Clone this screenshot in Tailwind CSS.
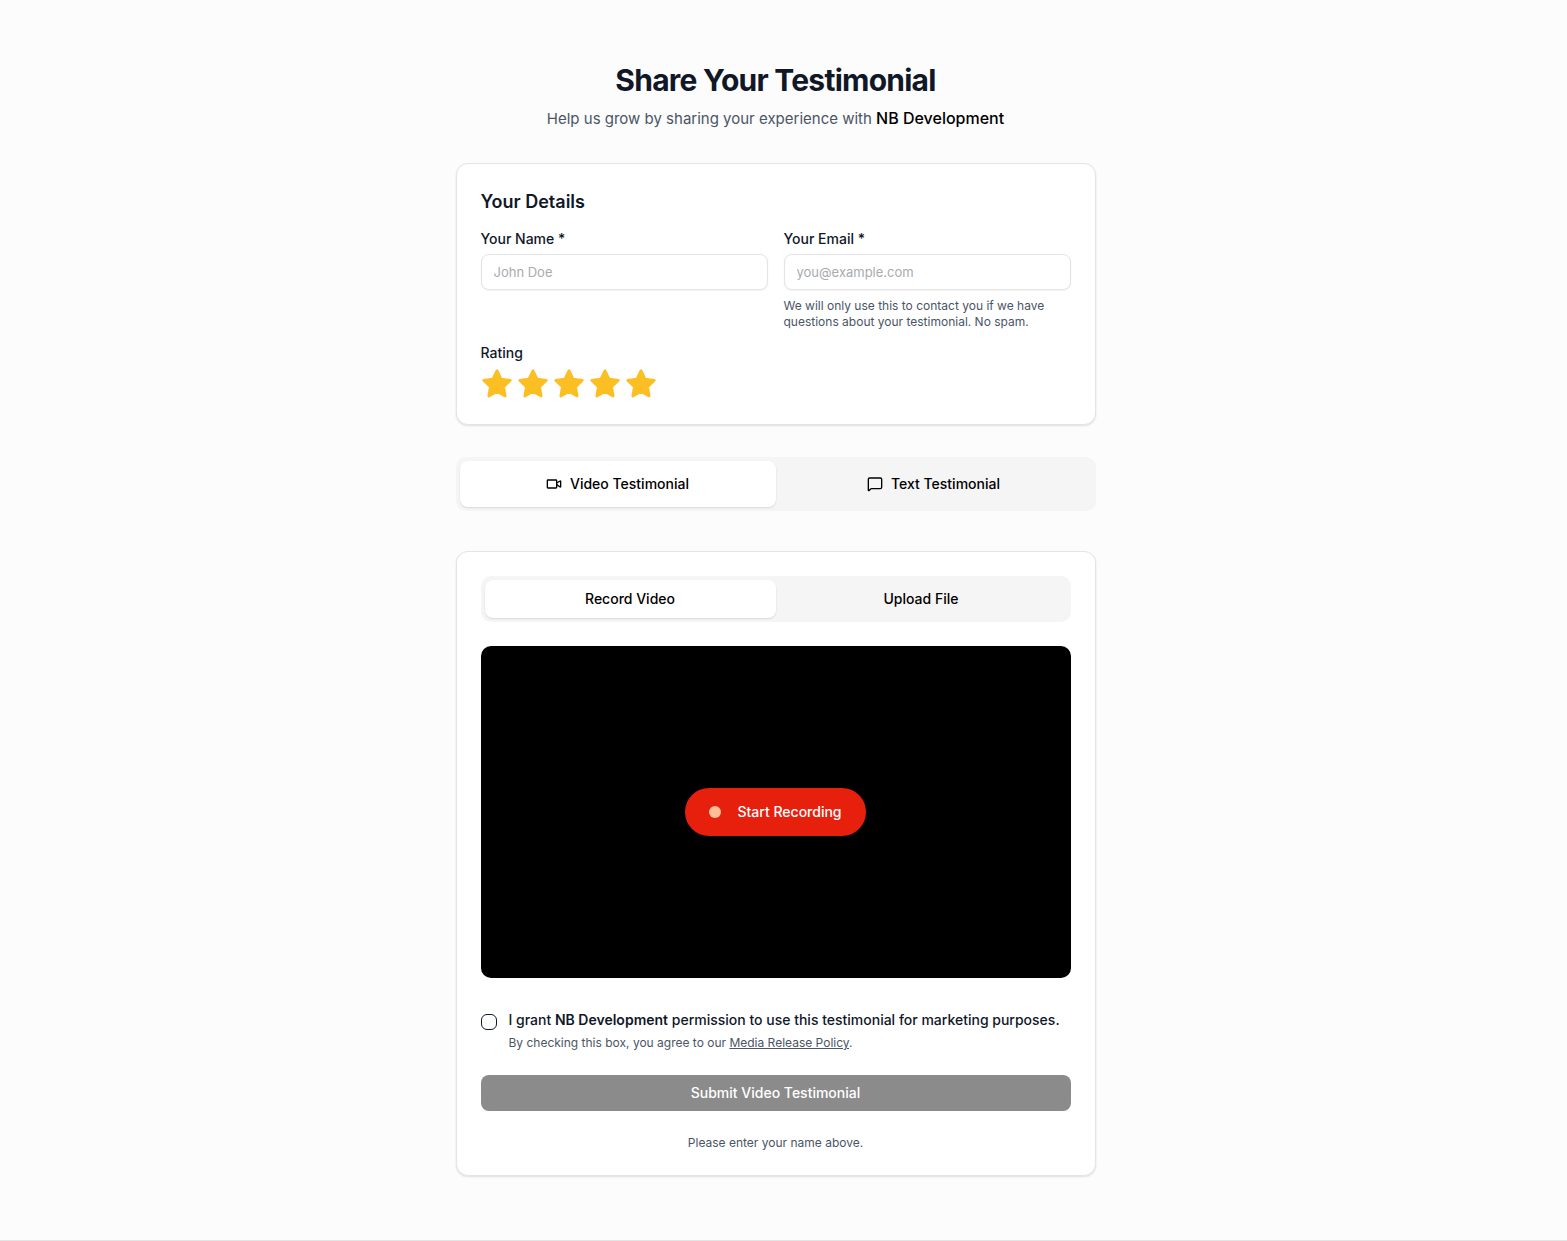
<!DOCTYPE html>
<html lang="en">
<head>
  <meta charset="UTF-8" />
  <meta name="viewport" content="width=device-width, initial-scale=1.0" />
  <title>Share Your Testimonial - NB Development</title>
  <script src="https://cdn.jsdelivr.net/npm/@tailwindcss/browser@4"></script>
</head>
<body class="min-h-screen bg-[#fcfcfc] font-['Inter',sans-serif] text-gray-900">

  <main class="pt-[62px] pb-16 pr-4">
    <div class="mx-auto w-full max-w-2xl px-4">

      <header class="mb-8 text-center">
        <h1 class="text-3xl leading-9 font-bold tracking-tight">Share Your Testimonial</h1>
        <p class="mt-2 text-[15px] leading-6 text-gray-600">Help us grow by sharing your experience with <span class="text-base leading-6 font-medium text-black">NB Development</span></p>
      </header>

      <!-- Details -->
      <section class="rounded-xl border border-[#e4e4e4] bg-white p-6 shadow-[0_1px_2px_rgb(0_0_0/0.12)]">
        <h2 class="mb-4 text-lg font-semibold">Your Details</h2>
        <div class="grid grid-cols-2 gap-4">
          <div>
            <label for="name" class="mb-2 block text-sm leading-none font-medium">Your Name *</label>
            <input id="name" type="text" placeholder="John Doe" class="h-9 w-full rounded-lg border border-[#e4e4e4] bg-white px-3 text-[13px] shadow-[0_1px_2px_rgb(0_0_0/0.06)] placeholder:text-[#a9abaf]" />
          </div>
          <div>
            <label for="email" class="mb-2 block text-sm leading-none font-medium">Your Email *</label>
            <input id="email" type="email" placeholder="you@example.com" class="h-9 w-full rounded-lg border border-[#e4e4e4] bg-white px-3 text-[13px] shadow-[0_1px_2px_rgb(0_0_0/0.06)] placeholder:text-[#a9abaf]" />
            <p class="mt-2 text-xs text-gray-600">We will only use this to contact you if we have questions about your testimonial. No spam.</p>
          </div>
        </div>

        <div class="mt-4">
          <p class="mb-2 text-sm leading-none font-medium">Rating</p>
          <div class="flex gap-1 text-[#fbbf24]">
            <button type="button" aria-label="1 star">
              <svg class="size-8" viewBox="0 0 24 24" fill="currentColor" stroke="currentColor" stroke-width="2" stroke-linecap="round" stroke-linejoin="round"><use href="#star" /></svg>
            </button>
            <button type="button" aria-label="2 stars">
              <svg class="size-8" viewBox="0 0 24 24" fill="currentColor" stroke="currentColor" stroke-width="2" stroke-linecap="round" stroke-linejoin="round"><use href="#star" /></svg>
            </button>
            <button type="button" aria-label="3 stars">
              <svg class="size-8" viewBox="0 0 24 24" fill="currentColor" stroke="currentColor" stroke-width="2" stroke-linecap="round" stroke-linejoin="round"><use href="#star" /></svg>
            </button>
            <button type="button" aria-label="4 stars">
              <svg class="size-8" viewBox="0 0 24 24" fill="currentColor" stroke="currentColor" stroke-width="2" stroke-linecap="round" stroke-linejoin="round"><use href="#star" /></svg>
            </button>
            <button type="button" aria-label="5 stars">
              <svg class="size-8" viewBox="0 0 24 24" fill="currentColor" stroke="currentColor" stroke-width="2" stroke-linecap="round" stroke-linejoin="round"><use href="#star" /></svg>
            </button>
          </div>
        </div>
      </section>

      <!-- Testimonial type -->
      <div role="tablist" class="mt-8 grid h-[54px] grid-cols-2 rounded-[10px] bg-[#f5f5f5] p-1 text-sm font-medium text-black">
        <button type="button" role="tab" aria-selected="true" class="flex items-center justify-center gap-2 rounded-lg bg-white shadow-[0_1px_2px_rgb(0_0_0/0.12)]">
          <svg class="size-4" viewBox="0 0 24 24" fill="none" stroke="currentColor" stroke-width="2" stroke-linecap="round" stroke-linejoin="round">
            <path d="m16 13 5.223 3.482a.5.5 0 0 0 .777-.416V7.87a.5.5 0 0 0-.752-.432L16 10.5" />
            <rect x="2" y="6" width="14" height="12" rx="1" />
          </svg>
          Video Testimonial
        </button>
        <button type="button" role="tab" aria-selected="false" class="flex items-center justify-center gap-2 rounded-lg">
          <svg class="size-4" viewBox="0 0 24 24" fill="none" stroke="currentColor" stroke-width="2" stroke-linecap="round" stroke-linejoin="round">
            <path d="M22 17a2 2 0 0 1-2 2H6.828a2 2 0 0 0-1.414.586l-2.202 2.202A.71.71 0 0 1 2 21.286V5a2 2 0 0 1 2-2h16a2 2 0 0 1 2 2z" />
          </svg>
          Text Testimonial
        </button>
      </div>

      <!-- Recorder -->
      <section class="mt-10 rounded-xl border border-[#e4e4e4] bg-white p-6 shadow-[0_1px_2px_rgb(0_0_0/0.12)]">
        <div role="tablist" class="grid h-[46px] grid-cols-2 rounded-[10px] bg-[#f5f5f5] p-1 text-sm font-medium text-black">
          <button type="button" role="tab" aria-selected="true" class="rounded-lg bg-white shadow-[0_1px_2px_rgb(0_0_0/0.12)]">Record Video</button>
          <button type="button" role="tab" aria-selected="false" class="rounded-lg">Upload File</button>
        </div>

        <div class="mt-6 flex aspect-video items-center justify-center rounded-[10px] bg-black">
          <button type="button" class="flex h-12 items-center gap-4 rounded-full bg-[#e7200d] px-6 text-sm font-medium text-white">
            <span class="size-3 rounded-full bg-[#ffbf99]"></span>
            Start Recording
          </button>
        </div>

        <div class="mt-8 flex gap-3">
          <input id="consent" type="checkbox" class="mt-1 size-4 shrink-0 appearance-none rounded-md border border-gray-900 bg-white checked:bg-black" />
          <div>
            <label for="consent" class="block text-sm font-medium">I grant <strong class="font-semibold">NB Development</strong> permission to use this testimonial for marketing purposes.</label>
            <p class="mt-[5px] text-xs text-gray-600">By checking this box, you agree to our <a href="#" class="underline">Media Release Policy</a>.</p>
          </div>
        </div>

        <button type="button" disabled class="mt-6 h-9 w-full rounded-lg bg-[#8b8b8b] text-sm font-medium text-white">Submit Video Testimonial</button>
        <p class="mt-6 text-center text-xs text-gray-600">Please enter your name above.</p>
      </section>

    </div>
  </main>

  <footer class="border-t border-[#e4e4e4]"></footer>

  <!-- Shared star shape -->
  <svg class="hidden">
    <symbol id="star" viewBox="0 0 24 24">
      <polygon points="12 2 15.09 8.26 22 9.27 17 14.14 18.18 21.02 12 17.77 5.82 21.02 7 14.14 2 9.27 8.91 8.26 12 2" />
    </symbol>
  </svg>

</body>
</html>
